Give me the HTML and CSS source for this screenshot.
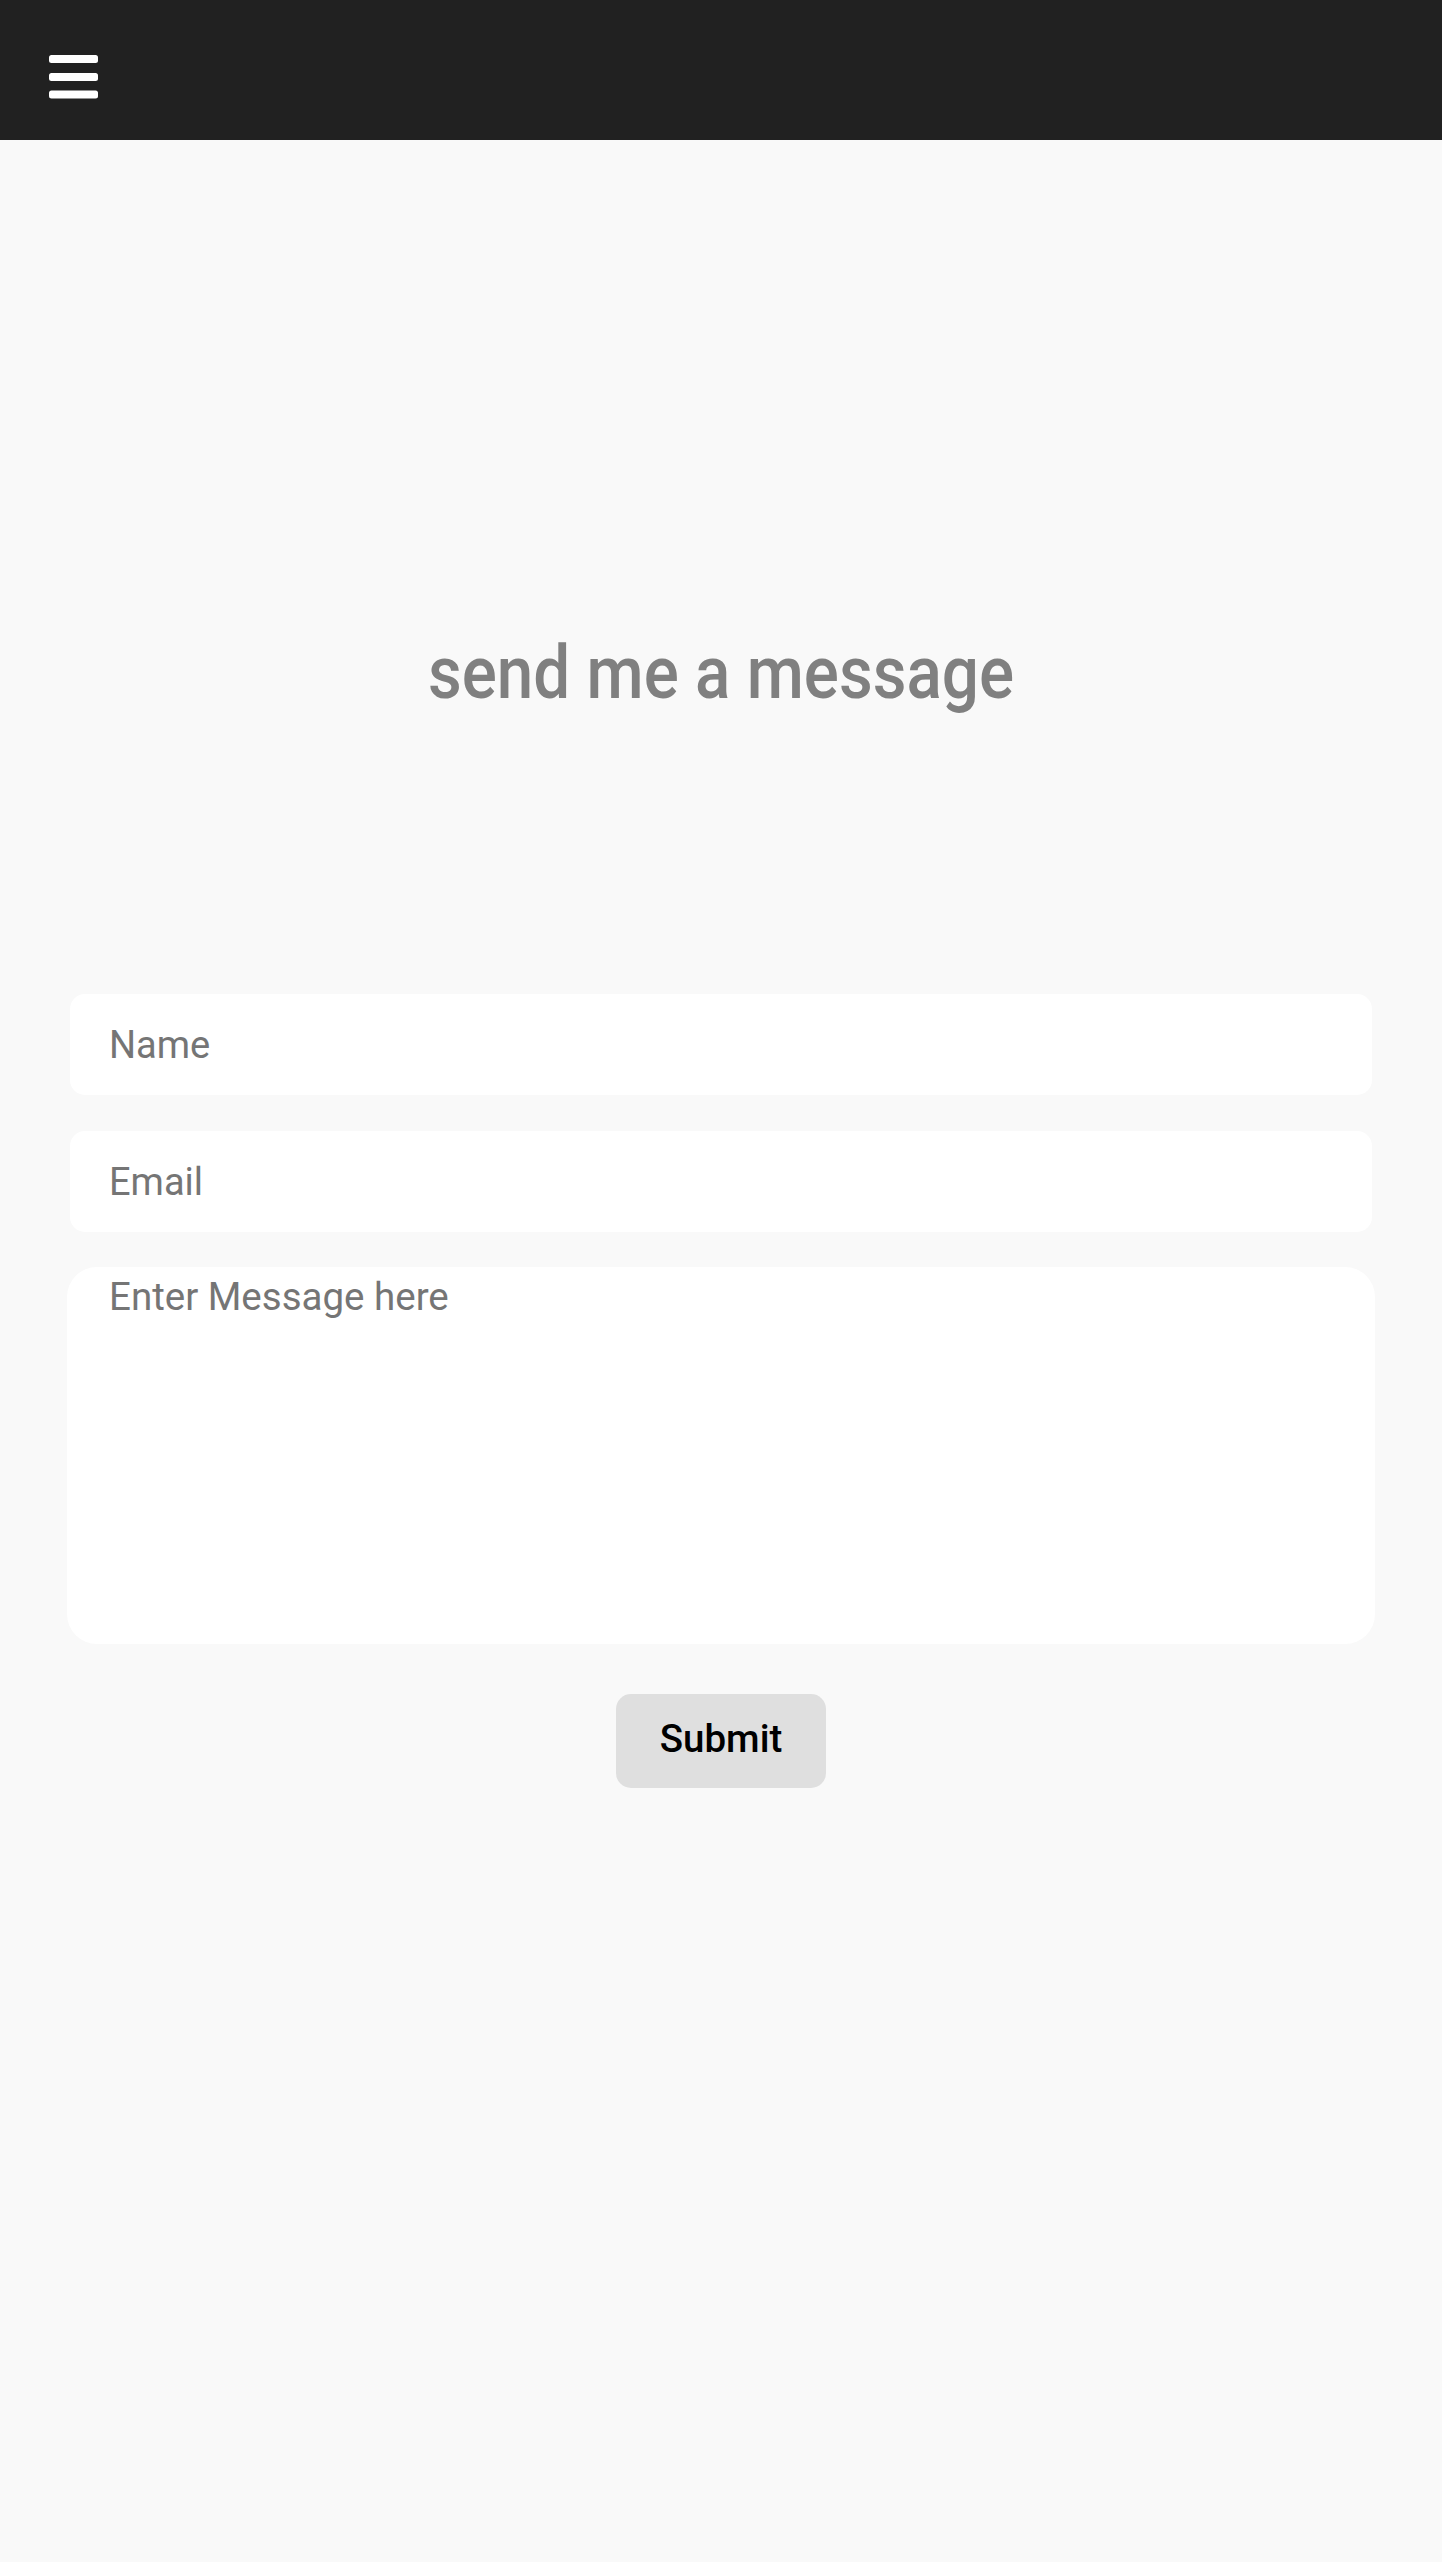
FILE: index.html
```html
<!DOCTYPE html>
<html lang="en">
<head>
<meta charset="utf-8">
<title>Contact</title>
<link rel="stylesheet" href="styles.css">
</head>
<body>
<header class="topbar">
  <button class="menu-btn" aria-label="Menu">
    <svg width="49" height="44" viewBox="0 0 49 44" aria-hidden="true">
      <rect x="0" y="0" width="49" height="8" rx="2.5" fill="#ffffff"/>
      <rect x="0" y="18" width="49" height="8" rx="2.5" fill="#ffffff"/>
      <rect x="0" y="35.5" width="49" height="8" rx="2.5" fill="#ffffff"/>
    </svg>
  </button>
</header>
<main class="contact">
  <h1 class="title">send me a message</h1>
  <form class="form">
    <input class="field" type="text" placeholder="Name">
    <input class="field field-email" type="email" placeholder="Email">
    <textarea class="message" placeholder="Enter Message here"></textarea>
    <button class="submit" type="button">Submit</button>
  </form>
</main>
</body>
</html>
```
FILE: styles.css
```css
html, body {
  margin: 0;
  padding: 0;
  background: #f9f9f9;
}
body {
  font-family: Roboto, "Noto Sans", Arial, sans-serif;
  min-height: 2562px;
}
.topbar {
  height: 140px;
  background: #212121;
  display: flex;
  align-items: flex-start;
  padding: 55px 0 0 49px;
  box-sizing: border-box;
}
.menu-btn {
  border: 0;
  padding: 0;
  margin: 0;
  background: none;
  display: block;
  line-height: 0;
  cursor: pointer;
}
.contact {
  padding-top: 496px;
}
.title {
  margin: 0;
  font-family: Roboto, sans-serif;
  font-weight: 500;
  font-size: 74px;
  line-height: 74px;
  color: #808080;
  text-align: center;
  transform: scaleX(0.886);
}
.form {
  margin-top: 284px;
  display: flex;
  flex-direction: column;
  align-items: center;
}
.field {
  width: 1302px;
  height: 101px;
  box-sizing: border-box;
  border: 0;
  border-radius: 15px;
  background: #ffffff;
  padding: 0 0 0 39px;
  font-family: Roboto, sans-serif;
  font-size: 38px;
  color: #222;
  outline: none;
}
.field-email {
  margin-top: 36px;
}
.field::placeholder, .message::placeholder {
  color: #757575;
  opacity: 1;
}
.message {
  margin-top: 35px;
  width: 1308px;
  height: 377px;
  box-sizing: border-box;
  border: 0;
  border-radius: 30px;
  background: #ffffff;
  padding: 7px 42px;
  font-family: Roboto, sans-serif;
  font-size: 38.5px;
  line-height: normal;
  resize: none;
  outline: none;
  display: block;
}
.submit {
  margin-top: 50px;
  width: 210px;
  height: 94px;
  border: 0;
  border-radius: 15px;
  background: #dfdfdf;
  font-family: Roboto, sans-serif;
  font-weight: 500;
  font-size: 38.5px;
  color: #000;
  padding: 0 0 6px;
  cursor: pointer;
}
```
